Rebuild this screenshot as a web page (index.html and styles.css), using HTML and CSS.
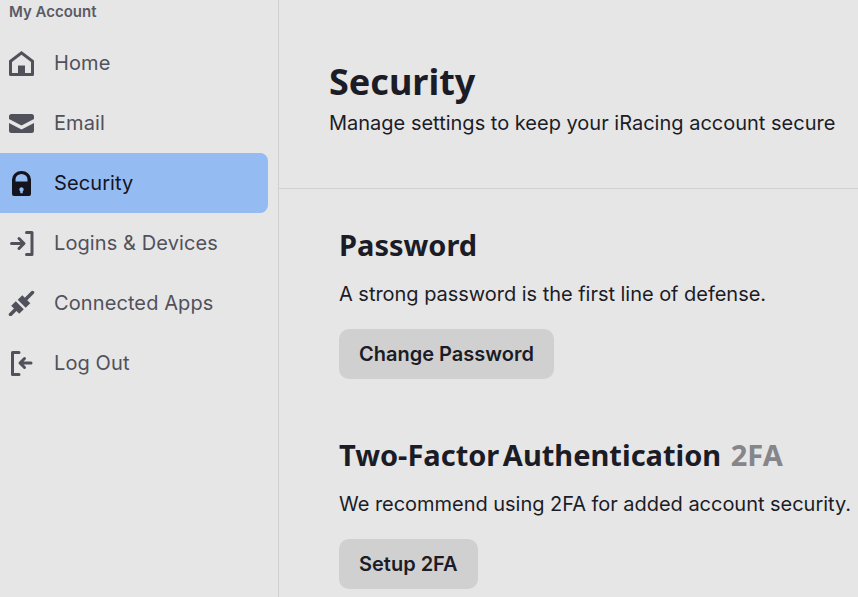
FILE: index.html
```html
<!DOCTYPE html>
<html lang="en">
<head>
  <meta charset="UTF-8" />
  <meta name="viewport" content="width=device-width, initial-scale=1.0"/>
  <title>Security</title>
  <link rel="stylesheet" href="styles.css">
</head>
<body>
  <div class="layout">
    <aside class="sidebar">
      <div class="sidebar-label">My Account</div>
      <nav class="nav">
        <a class="nav-item" href="#">
          <svg class="nav-icon" viewBox="0 0 27 26"><path fill="currentColor" fill-rule="evenodd" d="M13.500 1 26 10.500V24.500A1.500 1.500 0 0 1 24.500 26H2.500A1.500 1.500 0 0 1 1 24.500V10.500ZM13.500 4.800 4 12V23H10V15.500H17V23H23V12Z"/></svg>
          <span>Home</span>
        </a>
        <a class="nav-item" href="#">
          <svg class="nav-icon" viewBox="0 0 27 26"><path fill="currentColor" d="M3.500 4H23.500A2.500 2.500 0 0 1 26 6.500V9L13.500 15.500 1 9V6.500A2.500 2.500 0 0 1 3.500 4ZM1 13 13.500 19.500 26 13V20.500A2.500 2.500 0 0 1 23.500 23H3.500A2.500 2.500 0 0 1 1 20.500Z"/></svg>
          <span>Email</span>
        </a>
        <a class="nav-item active" href="#">
          <svg class="nav-icon" viewBox="0 0 27 26"><path fill="currentColor" fill-rule="evenodd" d="M4 10V9.500A9.500 8.500 0 0 1 23 9.500V24A2 2 0 0 1 21 26H6A2 2 0 0 1 4 24ZM7.500 11.500H19.500V9.500A6 5.500 0 0 0 7.500 9.500ZM13.500 17.200A2.300 2.300 0 0 0 12.300 21.400V23.200H14.700V21.400A2.300 2.300 0 0 0 13.500 17.200Z"/></svg>
          <span>Security</span>
        </a>
        <a class="nav-item" href="#">
          <svg class="nav-icon" viewBox="0 0 27 26"><path fill="none" stroke="currentColor" stroke-width="3" stroke-linecap="round" stroke-linejoin="round" d="M3.500 13.500H15M11 8.500 16 13.500 11 18.500M18.500 2.500H24V24.500H18.500"/></svg>
          <span>Logins &amp; Devices</span>
        </a>
        <a class="nav-item" href="#">
          <svg class="nav-icon" viewBox="0 0 27 26" fill="none" stroke="currentColor" stroke-linecap="round"><path stroke-width="3.500" d="M2.500 24.500 8 19M17 10 24.500 2.500"/><path stroke-width="6.500" stroke-linecap="butt" d="M5.500 13.500 13.500 21.500M12 7.500 20 15.500"/></svg>
          <span>Connected Apps</span>
        </a>
        <a class="nav-item" href="#">
          <svg class="nav-icon" viewBox="0 0 27 26"><path fill="none" stroke="currentColor" stroke-width="3" stroke-linecap="round" stroke-linejoin="round" d="M11 2.500H4.500V24.500H11M23 13H12.500M16.500 8.500 12 13 16.500 17.500"/></svg>
          <span>Log Out</span>
        </a>
      </nav>
    </aside>

    <main class="main">
      <header class="page-header">
        <h1>Security</h1>
        <p>Manage settings to keep your iRacing account secure</p>
      </header>

      <section class="section">
        <h2>Password</h2>
        <p>A strong password is the first line of defense.</p>
        <button class="btn">Change Password</button>
      </section>

      <section class="section">
        <h2>Two-Factor Authentication <span class="muted">2FA</span></h2>
        <p>We recommend using 2FA for added account security.</p>
        <button class="btn">Setup 2FA</button>
      </section>
    </main>
  </div>
</body>
</html>
```

FILE: styles.css
```css
html, body {
  height: 100%;
  overflow: hidden;
}

body {
  margin: 0;
  font-family: Inter, Arial, sans-serif;
  background: #e6e6e6;
  color: #1c1c26;
}

.layout {
  display: flex;
  height: 100%;
}

.sidebar {
  width: 279px;
  box-sizing: border-box;
  flex-shrink: 0;
  border-right: 1px solid #d0d0d0;
}

.sidebar-label {
  height: 33px;
  padding: 3px 0 0 9px;
  box-sizing: border-box;
  font-size: 15px;
  line-height: 17px;
  font-weight: 600;
  color: #5a5a64;
}

.nav-item {
  display: flex;
  align-items: center;
  gap: 19px;
  width: 268px;
  height: 60px;
  padding-left: 8px;
  box-sizing: border-box;
  border-radius: 0 8px 8px 0;
  font-size: 20px;
  letter-spacing: 0.1px;
  color: #51515b;
  text-decoration: none;
}

.nav-item.active {
  background: #94bbf2;
  color: #14141e;
}

.nav-icon {
  width: 27px;
  height: 26px;
  flex-shrink: 0;
}

.main {
  flex: 1;
  min-width: 0;
}

.page-header {
  height: 189px;
  padding: 60px 0 0 50px;
  box-sizing: border-box;
  border-bottom: 1px solid #d0d0d0;
}

h1 {
  margin: 0;
  font-family: "Noto Sans", Arial, sans-serif;
  font-size: 36px;
  line-height: 44px;
  font-weight: 700;
}

.page-header p {
  margin: 4px 0 0;
  font-size: 20px;
  line-height: 30px;
  white-space: nowrap;
}

.section {
  padding: 38px 0 0 60px;
  height: 210px;
  box-sizing: border-box;
}

h2 {
  margin: 0;
  font-family: "Noto Sans", Arial, sans-serif;
  font-size: 29px;
  line-height: 36px;
  font-weight: 700;
  word-spacing: -4px;
  white-space: nowrap;
}

.muted {
  color: #85858a;
  margin-left: 6px;
}

.section p {
  margin: 16px 0 20px;
  font-size: 20px;
  line-height: 30px;
  letter-spacing: -0.03px;
  white-space: nowrap;
}

.btn {
  display: block;
  height: 50px;
  padding: 0 20px;
  border: none;
  border-radius: 10px;
  background: #d0d0d0;
  font-family: inherit;
  font-size: 20px;
  font-weight: 600;
  color: #1c1c26;
  cursor: pointer;
}

.btn:hover {
  background: #c4c4c4;
}
```
